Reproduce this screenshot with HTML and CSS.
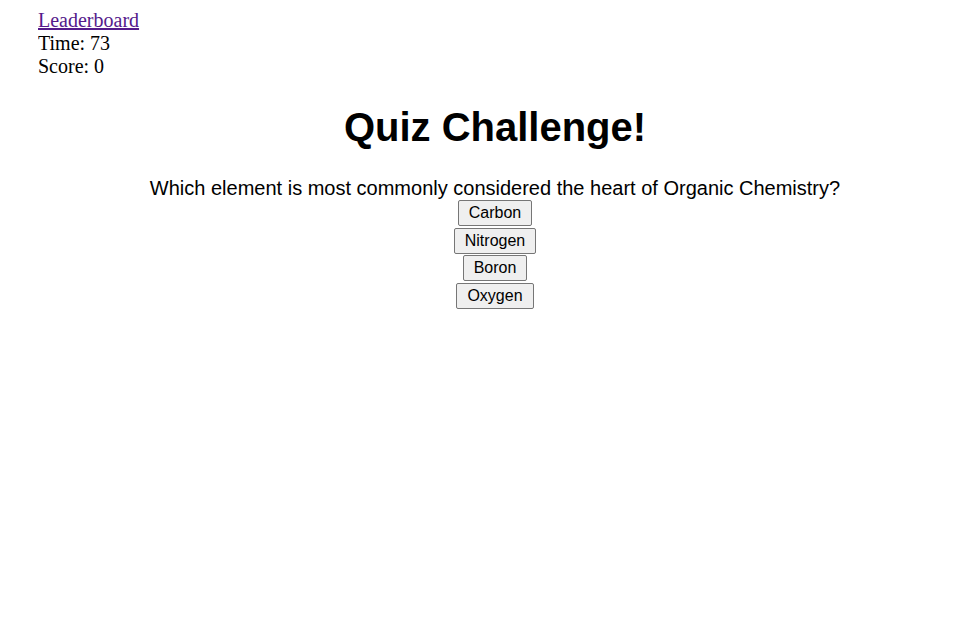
FILE: index.html
```html
<!DOCTYPE html>
<html>
<head>
<meta charset="utf-8">
<link rel="stylesheet" href="styles.css">
</head>
<body>
<header class="top">
  <a href="#" class="board-link">Leaderboard</a>
  <div class="stat">Time: 73</div>
  <div class="stat">Score: 0</div>
</header>
<main class="quiz">
  <h1 class="title">Quiz Challenge!</h1>
  <div class="question">Which element is most commonly considered the heart of Organic Chemistry?</div>
  <div class="answers">
    <button class="answer">Carbon</button>
    <button class="answer">Nitrogen</button>
    <button class="answer">Boron</button>
    <button class="answer">Oxygen</button>
  </div>
</main>
</body>
</html>
```
FILE: styles.css
```css
html, body {
  background: #ffffff;
}
body {
  margin: 8px 25px 0 38px;
  font-family: "Liberation Serif", "Times New Roman", serif;
  font-size: 20px;
  color: #000;
}
.top {
  display: flex;
  flex-direction: column;
  align-items: flex-start;
  line-height: 23px;
  padding-top: 1px;
}
.board-link {
  color: #551a8b;
  text-decoration: underline;
}
.quiz {
  text-align: center;
  font-family: "Liberation Sans", Arial, sans-serif;
}
.title {
  font-size: 40px;
  font-weight: bold;
  line-height: 46px;
  margin: 26px 0 27px;
}
.question {
  font-size: 20px;
  line-height: 23px;
}
.answers {
  display: flex;
  flex-direction: column;
  align-items: center;
  gap: 1.67px;
}
.answer {
  font-family: "Liberation Sans", Arial, sans-serif;
  font-size: 16px;
  line-height: 20px;
  padding: 2px 10px;
  color: #000;
  background: #efefef;
  border: 1px solid #767676;
  border-radius: 2px;
}
```
